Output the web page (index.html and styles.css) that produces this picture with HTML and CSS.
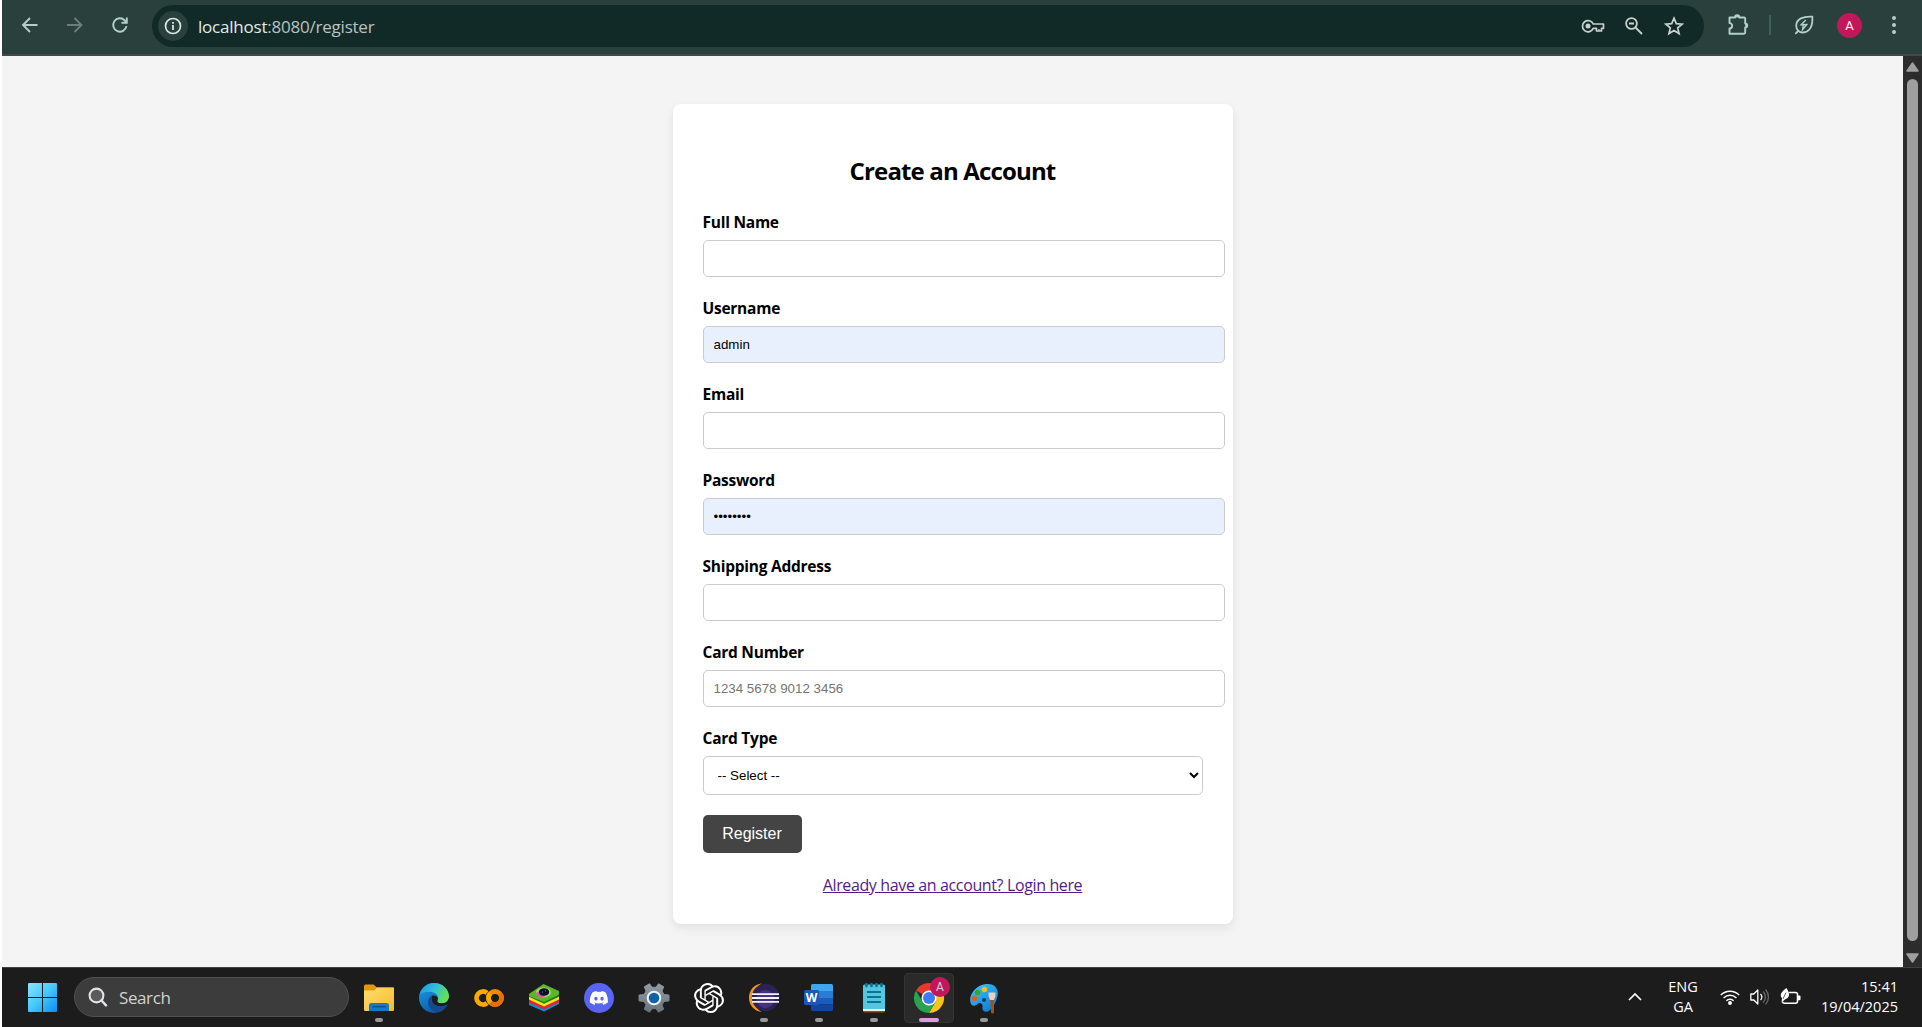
FILE: index.html
```html
<!DOCTYPE html>
<html lang="en">
<head>
<meta charset="utf-8">
<title>Create an Account</title>
<link rel="stylesheet" href="styles.css">
</head>
<body>
<div class="screen">
  <header class="toolbar">
    <nav class="nav">
      <svg width="20" height="20" viewBox="0 0 20 20" class="line"><path d="M17.5 10H3.5M10 3 3 10l7 7"/></svg>
      <svg width="20" height="20" viewBox="0 0 20 20" class="line dim"><path d="M2 10H16M9.500 3l7 7-7 7"/></svg>
      <svg width="20" height="20" viewBox="0 0 20 20" class="line"><path d="M16.500 11.200A6.700 6.700 0 1 1 14.700 5.300L16.500 7.200M16.800 2.500V7.700H11.500"/></svg>
    </nav>
    <div class="omnibox">
      <span class="site-info">
        <svg width="18" height="18" viewBox="0 0 18 18"><circle cx="9" cy="9" r="7.500" fill="none" stroke="#dce5e2" stroke-width="1.700"/><path d="M8.100 8h1.800v5H8.100zM8.100 5h1.800v1.800H8.100z" fill="#dce5e2"/></svg>
      </span>
      <span class="url"><b>localhost</b>:8080/register</span>
      <span class="box-icons">
        <svg width="24" height="16" viewBox="0 0 24 16"><path d="M12.200 6A5.600 5.600 0 1 0 12.200 10.300H15.500V13H20.500V10.300H22.500V6Z" fill="none" stroke="#c9d1cf" stroke-width="1.700" stroke-linejoin="round"/><circle cx="7" cy="8.100" r="2.500" fill="#c9d1cf"/><path d="M18 11v2" stroke="#c9d1cf" stroke-width="1.300"/></svg>
        <svg width="20" height="20" viewBox="0 0 20 20" fill="none" stroke="#c9d1cf" stroke-width="1.800"><circle cx="7.500" cy="7.500" r="5.400"/><path d="M11.500 11.500 18 18M5 7.500h5"/></svg>
        <svg width="20" height="20" viewBox="0 0 20 20"><path d="m10 2.200 2.300 5.400 5.900.5-4.500 3.800 1.400 5.700-5.100-3.100-5.100 3.100 1.400-5.700L1.800 8.100l5.900-.5Z" fill="none" stroke="#c9d1cf" stroke-width="1.700"/></svg>
      </span>
    </div>
    <div class="tools">
      <svg class="puzzle" width="24" height="24" viewBox="0 0 24 24"><path d="M3.500 4.500H9a2.200 2.200 0 0 1 4.400 0H18a1.200 1.200 0 0 1 1.200 1.200V10.500a2 2 0 0 1 0 4V19.500A1.200 1.200 0 0 1 18 20.700H3.500V15.500a2.600 2.600 0 0 0 0-5.400Z" fill="none" stroke="#b3cfc8" stroke-width="1.900" stroke-linejoin="round"/><path d="M9 4.500a2.200 2.200 0 0 1 4.400 0ZM19.200 10.500a2 2 0 0 1 0 4Z" fill="#b3cfc8"/></svg>
      <span class="divider"></span>
      <svg class="leaf" width="20" height="20" viewBox="0 0 20 20" fill="none" stroke="#b3cfc8" stroke-width="1.800"><path d="M18.300 1.700C9.500 1.200 2.200 3.500 2.200 10.800c0 3.700 2.900 6.700 6.600 6.700 7.200 0 10.200-7 9.500-15.800ZM1.300 18.800l3.300-3.300"/><path d="M11.800 5 7.200 9.700l5.600-.2L8.600 14.500l.8-5" stroke-width="1.400"/></svg>
      <span class="avatar">A</span>
      <svg width="6" height="20" viewBox="0 0 6 20" fill="#b3cfc8"><circle cx="3" cy="3" r="2"/><circle cx="3" cy="10" r="2"/><circle cx="3" cy="17" r="2"/></svg>
    </div>
  </header>

  <div class="viewport">
    <main class="page">
      <form class="card">
        <h2>Create an Account</h2>
        <div class="group"><label>Full Name</label><input type="text"></div>
        <div class="group"><label>Username</label><input class="filled" type="text" value="admin"></div>
        <div class="group"><label>Email</label><input type="text"></div>
        <div class="group"><label>Password</label><input class="filled" type="password" value="password"></div>
        <div class="group"><label>Shipping Address</label><input type="text"></div>
        <div class="group"><label>Card Number</label><input type="text" placeholder="1234 5678 9012 3456"></div>
        <div class="group"><label>Card Type</label><select><option>-- Select --</option></select></div>
        <button type="button">Register</button>
        <p class="login"><a href="#">Already have an account? Login here</a></p>
      </form>
    </main>
    <div class="scrollbar">
      <svg width="13" height="10" viewBox="0 0 13 10"><path d="M6.500 1 12 9H1Z" fill="#9f9f9f" stroke="#9f9f9f" stroke-width="1.500" stroke-linejoin="round"/></svg>
      <span class="thumb"></span>
      <svg width="13" height="10" viewBox="0 0 13 10"><path d="M6.500 9 12 1H1Z" fill="#9f9f9f" stroke="#9f9f9f" stroke-width="1.500" stroke-linejoin="round"/></svg>
    </div>
  </div>

  <footer class="taskbar">
    <svg class="start" width="29" height="29" viewBox="0 0 29 29"><defs><linearGradient id="win" gradientUnits="userSpaceOnUse" x1="0" y1="0" x2="29" y2="29"><stop offset="0" stop-color="#8be3ff"/><stop offset=".5" stop-color="#43c8fb"/><stop offset="1" stop-color="#0a8df5"/></linearGradient></defs><path d="M1 0h13v14H0V1a1 1 0 0 1 1-1ZM15 0h13a1 1 0 0 1 1 1v13H15ZM0 15h14v14H1a1 1 0 0 1-1-1ZM15 15h14v13a1 1 0 0 1-1 1H15Z" fill="url(#win)"/></svg>
    <div class="search">
      <svg width="20" height="20" viewBox="0 0 20 20"><circle cx="8.500" cy="8.500" r="6.900" fill="#5b5b5b" stroke="#e4e4e8" stroke-width="2.100"/><path d="m13.500 13.500 4.500 4.800" stroke="#e4e4e8" stroke-width="2.500" stroke-linecap="round"/></svg>
      <span>Search</span>
    </div>
    <div class="apps">
      <div class="app running">
        <svg width="32" height="32" viewBox="0 0 32 32"><defs><linearGradient id="fo" x1="0" y1="0" x2="1" y2="1"><stop offset="0" stop-color="#ffdf70"/><stop offset="1" stop-color="#f8b92c"/></linearGradient></defs><path d="M1 4a1.500 1.500 0 0 1 1.500-1.500h8L14 5.500h15.500A1.500 1.500 0 0 1 31 7v10H1Z" fill="#e09a08"/><path d="M1 8.500h10.500L14 5.600h17v22.200a1.200 1.200 0 0 1-1.200 1.200H2.200A1.200 1.200 0 0 1 1 27.800Z" fill="url(#fo)"/><path d="M6 29v-5.500A2.500 2.500 0 0 1 8.500 21h15a2.500 2.500 0 0 1 2.500 2.500V29Z" fill="#1479c9"/><path d="M9.500 24.700h13" stroke="#0b4b8d" stroke-width="1.300"/></svg>
      </div>
      <div class="app">
        <svg width="32" height="32" viewBox="0 0 32 32"><defs><linearGradient id="e1" x1="0" y1="0" x2="1" y2=".45"><stop offset="0" stop-color="#168fdc"/><stop offset=".5" stop-color="#2fbde0"/><stop offset="1" stop-color="#62df55"/></linearGradient><linearGradient id="e2" x1="0" y1="0" x2=".6" y2="1"><stop offset="0" stop-color="#1a9fe8"/><stop offset="1" stop-color="#0b57a5"/></linearGradient></defs><circle cx="16" cy="16" r="15" fill="url(#e2)"/><path d="M1.500 13C3 6 9 1 16 1c8.500 0 15 6 15 13.500 0 4-2.800 7-7 7-4 0-5.500-1.500-4.500-3 1.800-2.500.3-7.500-6-8.500C8.500 9.300 4 10.500 1.500 13Z" fill="url(#e1)"/><path d="M14 13.200C9 16 8.500 24 14.500 28.500c2 1.500 4.500 2 6.500 1.700 3.500-1 6.500-3.700 8-6.600-7 3-13.500.7-15.300-4.500-.7-2.200-.2-4.500.3-5.900Z" fill="#16498f"/><path d="M14.400 13.600c-1.700 3.500-.6 7.600 3 9.500 4 2 8 1.500 11.800-.5l2-.6L31 16l-.7 1.500c-1.300 3-4 4-7 3.800-3.300-.2-4.700-1.200-3.900-2.700 1.500-2.400-.7-5.800-5-5Z" fill="#1c1c1c"/></svg>
      </div>
      <div class="app">
        <svg width="32" height="32" viewBox="0 0 32 32" fill="none" stroke-width="4.800"><circle cx="22" cy="16" r="6.500" stroke="#f28a0b"/><path d="M17.400 20.600A6.500 6.500 0 0 0 26.600 11.400" stroke="#e56f09"/><path d="M14.100 10.900A6.500 6.500 0 1 0 14.100 21.100" stroke="#f9aa05"/><path d="M17.400 20.600A6.500 6.500 0 0 1 17.400 11.400" stroke="#f9aa05"/></svg>
      </div>
      <div class="app">
        <svg width="32" height="32" viewBox="0 0 32 32"><path d="m1 20 15-6 15 6v2L16 29.500 1 23Z" fill="#1989c9"/><path d="m1 17.500 15-6 15 6v2.700l-15 7L1 20.500Z" fill="#e52231"/><path d="m1 14.500 15-5 15 5v3l-15 7-15-7Z" fill="#f6e51d"/><path d="m1 12.500 15-7 15 7v2.200l-15 7-15-7Z" fill="#247d1c"/><path d="M1 12 15.500 2 31 9v3.500l-15 7.500L1 14Z" fill="#58b72a"/><ellipse cx="15.500" cy="10.500" rx="7.500" ry="5" fill="#a9db72"/><path d="M8 11c1 4 5 5 9 3.500L14 8Z" fill="#ee4ea9"/><ellipse cx="16" cy="10" rx="5.200" ry="3.800" fill="#071128"/><circle cx="14.500" cy="10" r=".6" fill="#7f8fb0"/><circle cx="17.500" cy="8.800" r=".6" fill="#7f8fb0"/></svg>
      </div>
      <div class="app">
        <svg width="32" height="32" viewBox="0 0 32 32"><circle cx="16" cy="16" r="15" fill="#5865f2"/><path transform="translate(6.800 6.800) scale(.765)" fill="#fff" d="M20.317 4.370a19.791 19.791 0 0 0-4.885-1.515c-.211.375-.444.865-.608 1.250a18.270 18.270 0 0 0-5.487 0 12.640 12.640 0 0 0-.617-1.250A19.740 19.740 0 0 0 3.677 4.370C.533 9.046-.320 13.580.099 18.057a19.900 19.900 0 0 0 5.993 3.030c.462-.630.874-1.295 1.226-1.994a13.100 13.100 0 0 1-1.872-.892l.370-.290c3.928 1.793 8.180 1.793 12.061 0l.372.292a12.300 12.300 0 0 1-1.873.892c.360.698.772 1.362 1.225 1.993a19.840 19.840 0 0 0 6.002-3.030c.500-5.177-.838-9.674-3.286-13.688ZM8.020 15.331c-1.183 0-2.157-1.086-2.157-2.419s.955-2.419 2.157-2.419 2.176 1.095 2.157 2.419c0 1.333-.956 2.419-2.157 2.419Zm7.975 0c-1.183 0-2.157-1.086-2.157-2.419s.955-2.419 2.157-2.419 2.176 1.095 2.157 2.419c0 1.333-.946 2.419-2.157 2.419Z"/></svg>
      </div>
      <div class="app">
        <svg width="32" height="32" viewBox="0 0 32 32"><defs><linearGradient id="gear" x1="0" y1="0" x2="0" y2="1"><stop offset="0" stop-color="#929ba3"/><stop offset="1" stop-color="#68737c"/></linearGradient></defs><path d="M11.500 1.800 14 5.300h4l2.500-3.500 5.200 3-1.700 4.300 2 3.400 5 .6v5.800l-5 .6-2 3.400 1.700 4.300-5.200 3L18 26.700h-4l-2.500 3.500-5.200-3L8 22.900l-2-3.400-5-.6v-5.800l5-.6 2-3.400-1.700-4.300Z" fill="url(#gear)" stroke="url(#gear)" stroke-linejoin="round"/><circle cx="16" cy="16" r="6.300" fill="#0f62aa" stroke="#f0f3f5" stroke-width="2"/></svg>
      </div>
      <div class="app">
        <svg width="30" height="30" viewBox="0 0 24 24"><path fill="#fff" d="M22.282 9.821a5.985 5.985 0 0 0-.516-4.910 6.046 6.046 0 0 0-6.510-2.900A6.065 6.065 0 0 0 4.981 4.182a5.985 5.985 0 0 0-3.998 2.900 6.046 6.046 0 0 0 .743 7.097 5.980 5.980 0 0 0 .510 4.911 6.051 6.051 0 0 0 6.515 2.900A5.985 5.985 0 0 0 13.260 24a6.056 6.056 0 0 0 5.772-4.206 5.990 5.990 0 0 0 3.998-2.900 6.056 6.056 0 0 0-.748-7.073zM13.260 22.430a4.476 4.476 0 0 1-2.877-1.041l.142-.080 4.778-2.758a.795.795 0 0 0 .393-.682v-6.737l2.020 1.169a.071.071 0 0 1 .038.052v5.583a4.504 4.504 0 0 1-4.494 4.494zM3.600 18.304a4.471 4.471 0 0 1-.535-3.014l.142.085 4.783 2.759a.771.771 0 0 0 .781 0l5.843-3.369v2.332a.080.080 0 0 1-.033.062L9.740 19.950a4.499 4.499 0 0 1-6.140-1.646zM2.341 7.896a4.485 4.485 0 0 1 2.366-1.973V11.600a.766.766 0 0 0 .388.677l5.815 3.354-2.020 1.169a.076.076 0 0 1-.071 0L3.989 14.011A4.504 4.504 0 0 1 2.341 7.872zm16.597 3.855-5.833-3.387L15.119 7.200a.076.076 0 0 1 .071 0l4.830 2.791a4.494 4.494 0 0 1-.677 8.104v-5.678a.790.790 0 0 0-.407-.667zm2.011-3.023-.142-.085-4.774-2.782a.776.776 0 0 0-.785 0L9.409 9.230V6.897a.066.066 0 0 1 .028-.061l4.830-2.787a4.499 4.499 0 0 1 6.680 4.660zM8.307 12.863l-2.020-1.164a.080.080 0 0 1-.038-.057V6.075a4.499 4.499 0 0 1 7.376-3.453l-.142.080L8.704 5.460a.795.795 0 0 0-.393.681zm1.097-2.365 2.602-1.500 2.607 1.500v2.999l-2.597 1.500-2.607-1.500z"/></svg>
      </div>
      <div class="app running">
        <svg width="32" height="32" viewBox="0 0 32 32"><path d="M14 1.500C6 2 1 8.500 1 15.700c0 7.300 5 13.600 13 14.100-5-2-8-7.800-8-14.100s3-12.200 8-14.200Z" fill="#f59323"/><circle cx="17.500" cy="15.500" r="13.700" fill="#2c2255"/><circle cx="17.500" cy="17" r="9" fill="#43347d"/><path d="M4 12.200h27M4 16h27M4 19.800h27" stroke="#f4f2fa" stroke-width="1.800"/></svg>
      </div>
      <div class="app running">
        <svg width="32" height="32" viewBox="0 0 32 32"><path d="M8 3.500A1.500 1.500 0 0 1 9.500 2h19A1.500 1.500 0 0 1 30 3.500V9H8Z" fill="#41a5ee"/><path d="M8 9h22v7H8Z" fill="#2b7cd3"/><path d="M8 16h22v6.500H8Z" fill="#1b5dbe"/><path d="M8 22.500h22v5a1.500 1.500 0 0 1-1.500 1.500h-19A1.500 1.500 0 0 1 8 27.500Z" fill="#1244a0"/><rect x="1" y="8" width="15" height="15" rx="1.500" fill="#1858b8"/><text x="8.500" y="20" text-anchor="middle" class="word-w">W</text></svg>
      </div>
      <div class="app running">
        <svg width="32" height="32" viewBox="0 0 32 32"><path d="M5 26h22v3a1.500 1.500 0 0 1-1.500 1.500h-19A1.500 1.500 0 0 1 5 29Z" fill="#9a4b0d"/><path d="M5 26h22v3H5Z" fill="#eee"/><path d="M5 4a1.500 1.500 0 0 1 1.500-1.500h19A1.500 1.500 0 0 1 27 4v23H5Z" fill="#56c5df"/><path d="M9 10h14M9 15h14M9 20h14" stroke="#087593" stroke-width="1.900"/><path d="M8.500 2v2M13.500 2v2M18.500 2v2M23.500 2v2" stroke="#087593" stroke-width="2.600" stroke-linecap="round"/></svg>
      </div>
      <div class="app running active">
        <svg width="32" height="32" viewBox="0 0 32 32"><path d="M16 16 3 8.500A15 15 0 0 1 29 8.500H16Z" fill="#e53a2d"/><path d="M16 8.500h13A15 15 0 0 1 16 31l6.500-11.200Z" fill="#fcc31e"/><path d="M3 8.500A15 15 0 0 0 16 31l6.500-11.200H9.500Z" fill="#29a350"/><circle cx="16" cy="16" r="7.500" fill="#fff"/><circle cx="16" cy="16" r="6" fill="#3b7ded"/></svg>
        <span class="badge">A</span>
      </div>
      <div class="app running">
        <svg width="32" height="32" viewBox="0 0 32 32"><defs><linearGradient id="pal" x1="0" y1="0" x2=".7" y2="1"><stop offset="0" stop-color="#43c8f8"/><stop offset="1" stop-color="#0b7edc"/></linearGradient></defs><path d="M18 2C27 1 31 7 29.500 14c-1.200 6-4 11-8 14.500-3.500 3-8 .5-7-3.500.8-3.500-3-5-5-3-1.500 1.700-4.500 3-6.300.3C-.5 16 5.500 3.500 18 2Z" fill="url(#pal)"/><circle cx="6.500" cy="16.500" r="2.700" fill="#e75a24"/><circle cx="9.500" cy="10.500" r="2.700" fill="#38a61e"/><circle cx="16.500" cy="7.500" r="2.700" fill="#f9ba25"/><circle cx="16" cy="18" r="2" fill="#123b69"/><path d="M22 15h4v15a1 1 0 0 1-3 0Z" fill="#a5540f"/><path d="M20.500 10.500h7V14L26 18h-4l-1.500-4Z" fill="#ecd2b5"/></svg>
      </div>
    </div>
    <div class="tray">
      <svg class="up" width="16" height="10" viewBox="0 0 16 10"><path d="m2 8 6-6 6 6" fill="none" stroke="#fff" stroke-width="1.700"/></svg>
      <div class="lang">ENG<br>GA</div>
      <div class="status">
        <svg width="20" height="16" viewBox="0 0 20 16" fill="none" stroke="#fff" stroke-width="1.500"><path d="M.8 6a13 13 0 0 1 18.400 0M3.600 9a9 9 0 0 1 12.800 0M6.400 11.800a5 5 0 0 1 7.200 0"/><circle cx="10" cy="14" r="1.200" fill="#fff"/></svg>
        <svg width="20" height="18" viewBox="0 0 20 18" fill="none" stroke="#fff" stroke-width="1.300"><path d="M.8 6h3l4-4v14l-4-4h-3Z" stroke-linejoin="round"/><path d="M10.500 6a4 4 0 0 1 0 6"/><path d="M13 3.500a7.500 7.500 0 0 1 0 11M15.500 1.500a11 11 0 0 1 0 15" stroke="#666"/></svg>
        <svg width="21" height="18" viewBox="0 0 21 18"><path d="M9 4.500h6.500a2 2 0 0 1 2 2v6.800a2 2 0 0 1-2 2H4.500a2 2 0 0 1-2-1.500" fill="none" stroke="#fff" stroke-width="1.500"/><path d="M18 7.500h1.500a1 1 0 0 1 1 1v2.700a1 1 0 0 1-1 1H18Z" fill="#fff"/><path d="M6.500 0c1 2 2.500 3.500 2.500 6.500 0 2.700-1.500 4-3.500 4.500L1.500 14.500 2 10.300C-1 7 1.500 3.500 6.500 0Z" fill="#fff"/><path d="M6 4.500 3 11" stroke="#1c1c1c" stroke-width=".7"/></svg>
      </div>
      <div class="clock">15:41<br>19/04/2025</div>
    </div>
  </footer>
</div>
</body>
</html>
```
FILE: styles.css
```css
* { box-sizing: border-box; }
body { margin: 0; background: #fff; font-family: "Open Sans", "Noto Sans", sans-serif; }
svg { display: block; flex: none; }
.screen { display: flex; flex-direction: column; width: 1922px; height: 1027px; padding-left: 2px; overflow: hidden; }

.toolbar { display: flex; align-items: center; flex: none; height: 56px; padding: 0 25px 4px 18px; background: #29403c; border-bottom: 2px solid #424a49; }
.nav { display: flex; gap: 25px; width: 132px; }
.line { fill: none; stroke: #b3cfc8; stroke-width: 1.900; }
.dim { stroke: #6c7e7b; }
.omnibox { display: flex; align-items: center; flex: none; width: 1552px; height: 42px; margin-top: 2px; padding: 0 20px 0 6px; border-radius: 21px; background: #122a27; }
.site-info { display: grid; place-items: center; width: 30px; height: 30px; border-radius: 50%; background: #29403c; }
.url { margin: 2px 0 0 10px; color: #b9c2c0; font: 17px/24px "Open Sans", sans-serif; letter-spacing: -.22px; }
.url b { font-weight: 400; color: #e1eae7; }
.box-icons { display: flex; align-items: center; gap: 20px; margin-left: auto; }
.box-icons svg:first-child { margin-right: -1px; }
.tools { display: flex; align-items: center; flex: 1; margin-left: 22px; }
.divider { width: 2px; height: 20px; margin: 0 23px 0 19px; background: #40605a; }
.avatar { display: grid; place-items: center; width: 25px; height: 25px; margin: 0 auto 0 23px; border-radius: 50%; background: #c2185b; color: #fff; font: 13px/1 Roboto, sans-serif; }

.viewport { display: flex; flex: none; height: 911px; }
.page { flex: 1; padding-top: 48px; background: #f4f4f4; }
.card { width: 560px; height: 820px; margin: 0 auto; padding: 51px 30px 30px; border-radius: 8px; background: #fff; box-shadow: 0 4px 10px rgba(0, 0, 0, .08); color: #000; }
.card h2 { margin: 0 0 24px; font-size: 24px; line-height: 32px; letter-spacing: -.85px; text-align: center; }
.group { margin-bottom: 20px; }
.group label { display: block; margin-bottom: 7px; font-size: 15.500px; font-weight: 700; line-height: 22px; letter-spacing: -.25px; }
.group input, .group select { display: block; border: 1px solid #ccc; border-radius: 5px; background: #fff; color: #000; font: 13.333px "Liberation Sans", Arial, sans-serif; outline: 0; }
.group input { width: 522px; height: 37px; padding: 10px; }
.group input.filled { background: #e8f0fe; }
.group input::placeholder { color: #757575; }
.group select { width: 500px; height: 39px; padding: 10px; }
.card button { display: block; width: 99px; height: 38px; padding: 0; border: 0; border-radius: 5px; background: #444; color: #fff; font: 16px "Liberation Sans", Arial, sans-serif; }
.login { margin: 21px 0 0; text-align: center; font-size: 16px; line-height: 22px; letter-spacing: -.37px; }
.login a { color: #551a8b; }

.scrollbar { display: flex; flex-direction: column; align-items: center; justify-content: space-between; width: 19px; padding: 6px 0 4px; background: #2c2c2c; }
.thumb { flex: 1; width: 11px; margin: 7px 0 12px; border-radius: 6px; background: #9f9f9f; }

.taskbar { display: flex; align-items: center; flex: none; height: 60px; padding: 0 24px 0 26px; border-top: 1px solid #404040; background: #1c1c1c; }
.search { display: flex; align-items: center; gap: 11px; width: 275px; height: 40px; margin: 0 0 1px 17px; padding-left: 13px; border: 1px solid #505050; border-radius: 20px; background: #3c3c3c; color: #d2d2d2; font-size: 17px; letter-spacing: -.4px; }
.apps { display: flex; gap: 5px; margin-left: 5px; }
.app { position: relative; display: grid; place-items: center; width: 50px; height: 50px; border-radius: 5px; }
.app.running::after { content: ""; position: absolute; bottom: 1px; left: 21px; width: 8px; height: 4px; border-radius: 2px; background: #9a9a9a; }
.app.active { background: #2a2a2a; box-shadow: inset 0 0 0 1px #353535; }
.app.active::after { left: 15px; width: 20px; background: #dd9be2; }
.badge { position: absolute; top: 4px; left: 26px; display: grid; place-items: center; width: 20px; height: 20px; border-radius: 50%; background: #c2185b; color: #f3c8d9; font: 12px/1 Roboto, sans-serif; }
.word-w { fill: #fff; font: 700 12px "Open Sans", sans-serif; }
.tray { display: flex; align-items: center; margin: 0 0 1px auto; color: #fff; font-size: 14.500px; line-height: 20px; }
.lang { width: 40px; margin-left: 20px; text-align: center; }
.status { display: flex; align-items: center; gap: 10px; margin-left: 17px; }
.clock { width: 97px; text-align: right; }
```
